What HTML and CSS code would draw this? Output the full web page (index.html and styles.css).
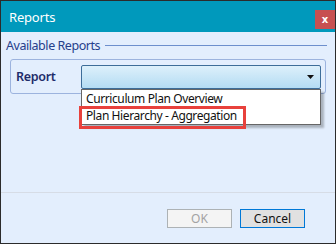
FILE: index.html
```html
<!DOCTYPE html>
<html lang="en">
<head>
  <meta charset="UTF-8">
  <title>Reports</title>
  <link rel="stylesheet" href="styles.css">
</head>
<body>

  <div class="window">
    <div class="title-bar">
      <span class="title">Reports</span>
      <button class="close-btn">x</button>
    </div>

    <div class="content">
      <div class="legend">
        <span>Available Reports</span>
        <div class="legend-line"></div>
      </div>

      <div class="group">
        <label class="field-label">Report</label>
        <div class="combo">
          <div class="combo-box">
            <svg class="arrow" width="7" height="4" viewBox="0 0 7 4"><path d="M0 0H7L3.5 4Z" fill="#111"/></svg>
          </div>
          <ul class="drop-list">
            <li>Curriculum Plan Overview</li>
            <li>Plan Hierarchy - Aggregation</li>
          </ul>
          <div class="highlight"></div>
        </div>
      </div>

      <div class="footer">
        <button class="btn ok-btn" disabled>OK</button>
        <button class="btn cancel-btn">Cancel</button>
      </div>
    </div>
  </div>

</body>
</html>
```

FILE: styles.css
```css
body {
  margin: 0;
  font-family: "Noto Sans", "Open Sans", sans-serif;
}
.window {
  width: 336px;
  height: 244px;
  box-sizing: border-box;
  border: 1px solid #2b2b2b;
  display: flex;
  flex-direction: column;
  background: #e3eefd;
}
.title-bar {
  height: 31px;
  background: #0099bc;
  display: flex;
  justify-content: space-between;
  align-items: center;
  padding-left: 8px;
}
.title {
  color: #fff;
  font-size: 13px;
  letter-spacing: -0.2px;
}
.close-btn {
  align-self: flex-end;
  margin-bottom: 3px;
  width: 20px;
  height: 19px;
  padding: 0;
  border: none;
  background: #c75050;
  color: #fff;
  font-family: "DejaVu Sans", sans-serif;
  font-weight: bold;
  font-size: 10px;
  line-height: 17px;
}
.content {
  flex: 1;
  display: flex;
  flex-direction: column;
}
.legend {
  display: flex;
  align-items: center;
  gap: 5px;
  padding: 3px 8px 0 5px;
  color: #26408b;
  font-size: 12.5px;
  letter-spacing: -0.45px;
  height: 20px;
}
.legend-line {
  flex: 1;
  height: 1px;
  background: #6d8fcd;
  margin-top: 1px;
}
.group {
  margin: 4px 9px 0 9px;
  height: 33px;
  border: 1px solid #9cb3de;
  border-radius: 3px;
  display: flex;
  align-items: center;
  padding: 0 4px 0 5px;
}
.field-label {
  width: 65px;
  color: #1e2c6a;
  font-weight: 600;
  font-size: 12.5px;
  letter-spacing: -0.3px;
}
.combo {
  flex: 1;
  position: relative;
}
.combo-box {
  height: 22px;
  border: 1px solid #3d6d99;
  border-radius: 2px;
  background: linear-gradient(#ddf0fb, #b4dcf3);
  display: flex;
  justify-content: flex-end;
  align-items: center;
  padding-right: 6px;
}
.drop-list {
  position: absolute;
  top: 24px;
  left: 0;
  right: 0;
  margin: 0;
  padding: 0;
  list-style: none;
  background: #fff;
  border: 1px solid #666;
  box-shadow: 3px 3px 2px rgba(0,0,0,0.25);
  z-index: 1;
}
.drop-list li {
  height: 17px;
  line-height: 17px;
  padding-left: 4px;
  font-size: 12px;
  letter-spacing: -0.4px;
  color: #111;
}
.highlight {
  position: absolute;
  top: 41px;
  left: -2px;
  width: 161px;
  height: 17px;
  border: 3px solid #e8413c;
  z-index: 2;
}
.footer {
  margin-top: auto;
  border-top: 1px solid #d6dce6;
  display: flex;
  justify-content: flex-end;
  gap: 8px;
  padding: 16px 30px 15px 0;
}
.btn {
  width: 65px;
  height: 19px;
  padding: 0;
  font-family: "Noto Sans", sans-serif;
  font-size: 12px;
  line-height: 15px;
}
.ok-btn {
  background: #f4f4f4;
  border: 1px solid #adb2b5;
  color: #a3a3a3;
}
.cancel-btn {
  background: #e1e1e1;
  border: 1px solid #0078d7;
  color: #111;
}
```
